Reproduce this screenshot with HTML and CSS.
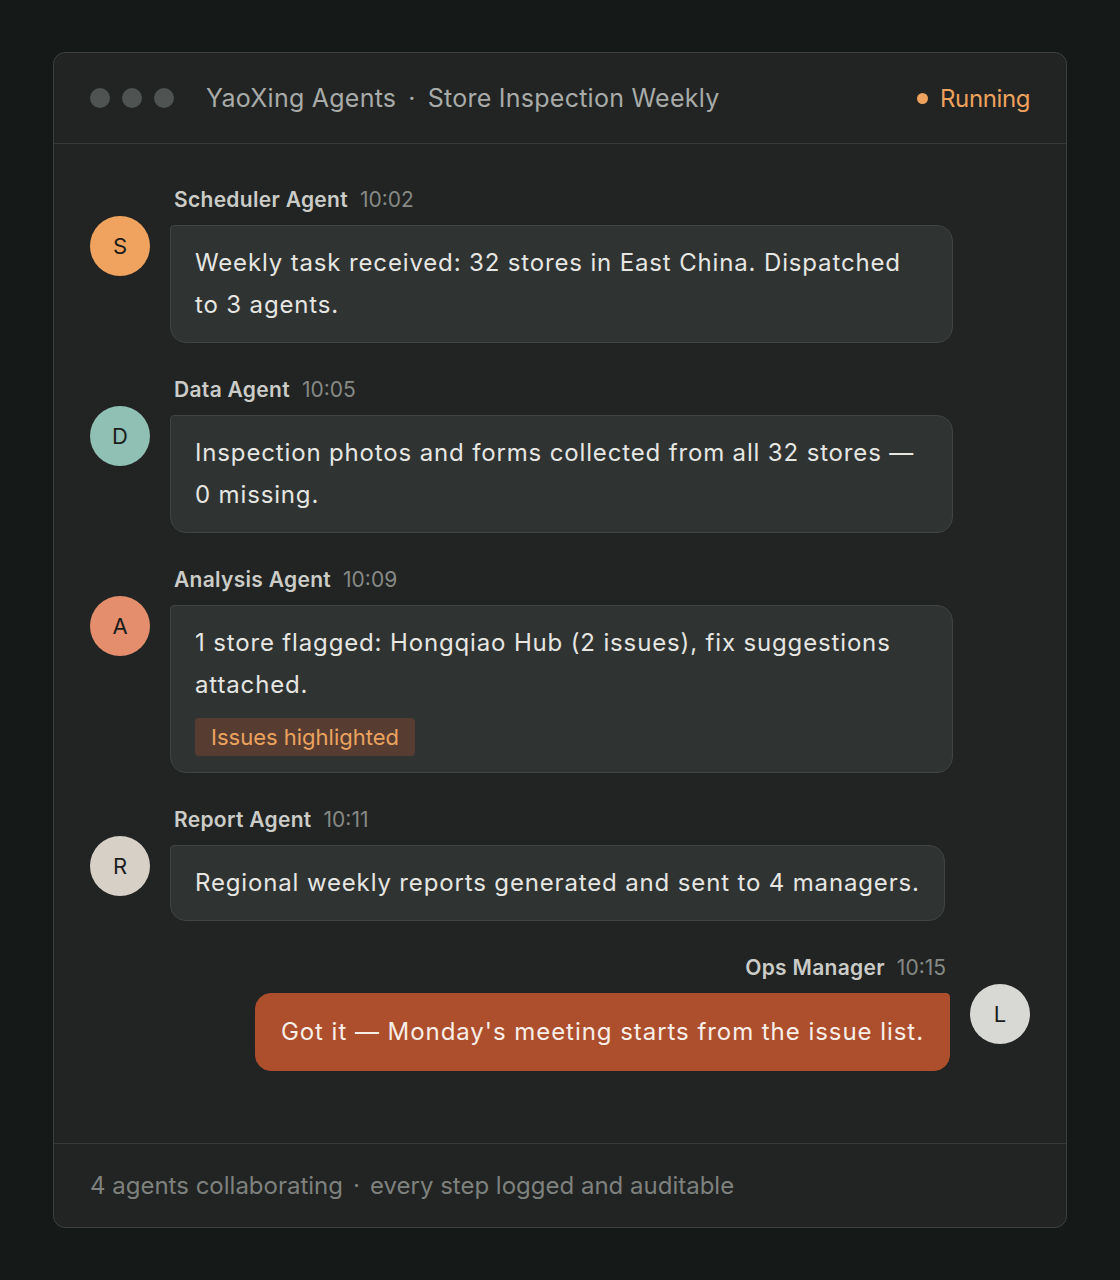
FILE: index.html
```html
<!DOCTYPE html>
<html lang="en">
<head>
<meta charset="utf-8">
<title>YaoXing Agents · Store Inspection Weekly</title>
<link rel="stylesheet" href="styles.css">
</head>
<body>
<div class="window">
  <header class="titlebar">
    <div class="lights"><span class="light"></span><span class="light"></span><span class="light"></span></div>
    <div class="title">YaoXing Agents<span class="sep">·</span>Store Inspection Weekly</div>
    <div class="status"><span class="status-dot"></span>Running</div>
  </header>
  <main class="chat">
    <div class="msg">
      <div class="avatar av-s">S</div>
      <div class="msg-body">
        <div class="meta"><span class="name">Scheduler Agent</span><span class="time">10:02</span></div>
        <div class="bubble">Weekly task received: 32 stores in East China. Dispatched to 3 agents.</div>
      </div>
    </div>
    <div class="msg">
      <div class="avatar av-d">D</div>
      <div class="msg-body">
        <div class="meta"><span class="name">Data Agent</span><span class="time">10:05</span></div>
        <div class="bubble">Inspection photos and forms collected from all 32 stores — 0 missing.</div>
      </div>
    </div>
    <div class="msg">
      <div class="avatar av-a">A</div>
      <div class="msg-body">
        <div class="meta"><span class="name">Analysis Agent</span><span class="time">10:09</span></div>
        <div class="bubble">
          <div>1 store flagged: Hongqiao Hub (2 issues), fix suggestions attached.</div>
          <div class="tag">Issues highlighted</div>
        </div>
      </div>
    </div>
    <div class="msg">
      <div class="avatar av-r">R</div>
      <div class="msg-body">
        <div class="meta"><span class="name">Report Agent</span><span class="time">10:11</span></div>
        <div class="bubble">Regional weekly reports generated and sent to 4 managers.</div>
      </div>
    </div>
    <div class="msg msg-self">
      <div class="avatar av-l">L</div>
      <div class="msg-body">
        <div class="meta"><span class="name">Ops Manager</span><span class="time">10:15</span></div>
        <div class="bubble bubble-self">Got it — Monday's meeting starts from the issue list.</div>
      </div>
    </div>
  </main>
  <footer class="footer">4 agents collaborating<span class="sep">·</span>every step logged and auditable</footer>
</div>
</body>
</html>
```
FILE: styles.css
```css
* { box-sizing: border-box; }
html, body { margin: 0; }
body {
  background: #151918;
  padding: 52px 53px;
  font-family: "Inter", "Noto Sans", Arial, sans-serif;
  color: #e6e6e2;
}
.window {
  background: #212423;
  border: 1px solid #3d403f;
  border-radius: 12px;
  overflow: hidden;
}
.titlebar {
  height: 91px;
  display: flex;
  align-items: center;
  padding: 0 36px;
  border-bottom: 1px solid #373a39;
}
.lights { display: flex; gap: 12px; margin-right: 32px; }
.light { width: 20px; height: 20px; border-radius: 50%; background: #4f5351; }
.title { font-size: 25px; letter-spacing: 0.25px; color: #a8aba8; flex: 1; }
.sep { margin: 0 12px; }
.status { display: flex; align-items: center; font-size: 24px; letter-spacing: -0.4px; color: #eea25d; }
.status-dot { width: 11px; height: 11px; border-radius: 50%; background: #eea25d; margin-right: 12px; }

.chat {
  padding: 43px 36px 72px;
  display: flex;
  flex-direction: column;
  gap: 34px;
}
.msg { display: flex; gap: 20px; align-items: flex-start; }
.msg-self { flex-direction: row-reverse; }
.avatar {
  flex: none;
  width: 60px; height: 60px; border-radius: 50%;
  margin-top: 29px;
  display: flex; align-items: center; justify-content: center;
  font-size: 22px; color: #1b1d1c;
}
.av-s { background: #f0a35e; }
.av-d { background: #90bfb3; }
.av-a { background: #e48e6d; }
.av-r { background: #d6d0c7; }
.av-l { background: #d8d8d4; }
.msg-body { display: flex; flex-direction: column; align-items: flex-start; min-width: 0; }
.msg-self .msg-body { align-items: flex-end; }
.meta { height: 26px; line-height: 26px; margin-bottom: 12px; padding: 0 4px; font-size: 21px; white-space: nowrap; }
.name { font-weight: 600; letter-spacing: 0.3px; color: #cbccc8; margin-right: 12px; }
.time { color: #868985; }
.bubble {
  max-width: 783px;
  background: #2f3332;
  border: 1px solid #404443;
  border-radius: 4px 16px 16px 16px;
  padding: 16px 24px;
  font-size: 24px;
  letter-spacing: 0.85px;
  line-height: 42px;
  color: #e6e6e2;
}
.bubble-self {
  background: #ad4f2d;
  border-color: #ad4f2d;
  border-radius: 16px 4px 16px 16px;
  color: #f8eee8;
  padding: 17px 25px;
  letter-spacing: 0.95px;
}
.tag {
  width: fit-content;
  margin-top: 12px;
  height: 38px;
  line-height: 38px;
  padding: 0 16px;
  border-radius: 4px;
  background: #573d31;
  color: #eba35f;
  font-size: 22px;
  letter-spacing: 0;
}
.footer {
  height: 84px;
  border-top: 1px solid #373a39;
  display: flex;
  align-items: center;
  padding: 0 36px;
  font-size: 24px;
  color: #7e817e;
}
.footer .sep { margin: 0 10px; }
```
